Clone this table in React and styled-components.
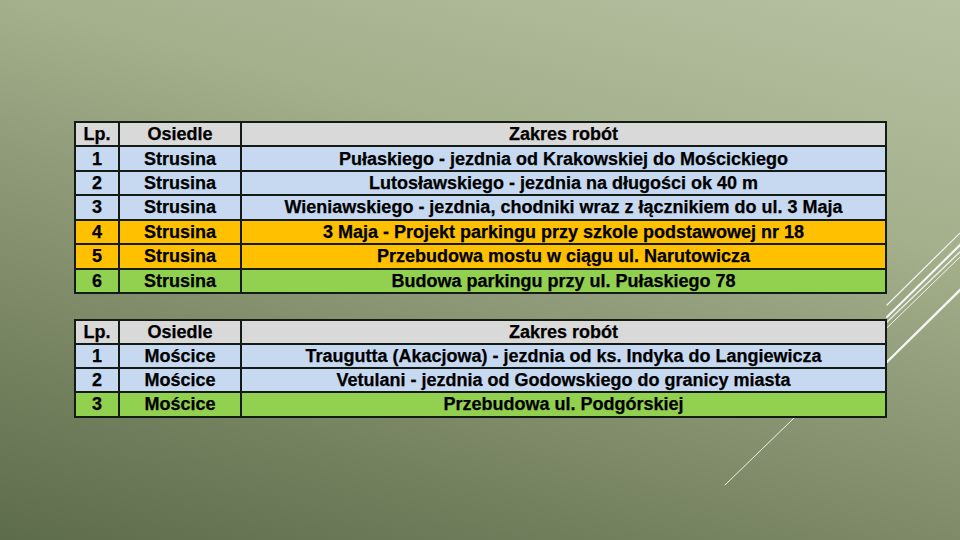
import React from "react";
import styled, { createGlobalStyle } from "styled-components";

const GlobalStyle = createGlobalStyle`
  html, body {
    margin: 0;
    padding: 0;
  }
  body {
    font-family: "Liberation Sans", Arial, sans-serif;
  }
`;

const Slide = styled.div`
  position: relative;
  width: 960px;
  height: 540px;
  overflow: hidden;
  box-sizing: border-box;
  padding: 121px 73px 0 74px;
  display: flex;
  flex-direction: column;
  gap: 25px;
  background: linear-gradient(
    15deg,
    #5d6c4b 0%,
    #7e8a68 32%,
    #a4b08c 68%,
    #b5c1a1 100%
  );
`;

const Decor = styled.svg`
  position: absolute;
  inset: 0;
  z-index: 0;
  pointer-events: none;
`;

const Table = styled.table`
  position: relative;
  z-index: 1;
  width: 100%;
  height: ${(p) => p.$height}px;
  border-collapse: collapse;
  table-layout: fixed;
  font-family: "Liberation Sans", Arial, sans-serif;
  font-weight: 700;
  font-size: 18px;
  color: #000;
  -webkit-text-stroke: 0.25px #000;
`;

const colors = {
  head: "#d9d9d9",
  blue: "#c6d9f1",
  orange: "#ffc000",
  green: "#92d050",
};

const Row = styled.tr`
  background: ${(p) => colors[p.$tone]};
`;

const Cell = styled.td`
  padding: 0;
  border: 2px solid #141a14;
  text-align: center;
  vertical-align: middle;
  line-height: 1;
  white-space: nowrap;
`;

const strusina = [
  ["1", "Strusina", "Pułaskiego - jezdnia od Krakowskiej do Mościckiego", "blue"],
  ["2", "Strusina", "Lutosławskiego - jezdnia na długości ok 40 m", "blue"],
  ["3", "Strusina", "Wieniawskiego - jezdnia, chodniki wraz z łącznikiem do ul. 3 Maja", "blue"],
  ["4", "Strusina", "3 Maja - Projekt parkingu przy szkole podstawowej nr 18", "orange"],
  ["5", "Strusina", "Przebudowa mostu w ciągu ul. Narutowicza", "orange"],
  ["6", "Strusina", "Budowa parkingu przy ul. Pułaskiego 78", "green"],
];

const moscice = [
  ["1", "Mościce", "Traugutta (Akacjowa) - jezdnia od ks. Indyka do Langiewicza", "blue"],
  ["2", "Mościce", "Vetulani - jezdnia od Godowskiego do granicy miasta", "blue"],
  ["3", "Mościce", "Przebudowa ul. Podgórskiej", "green"],
];

const WorksTable = ({ rows, height }) => (
  <Table $height={height}>
    <colgroup>
      <col style={{ width: 44 }} />
      <col style={{ width: 122 }} />
      <col />
    </colgroup>
    <tbody>
      <Row $tone="head">
        <Cell>Lp.</Cell>
        <Cell>Osiedle</Cell>
        <Cell>Zakres robót</Cell>
      </Row>
      {rows.map(([lp, area, scope, tone]) => (
        <Row key={lp} $tone={tone}>
          <Cell>{lp}</Cell>
          <Cell>{area}</Cell>
          <Cell>{scope}</Cell>
        </Row>
      ))}
    </tbody>
  </Table>
);

const Lines = () => (
  <Decor width="960" height="540" viewBox="0 0 960 540">
    <g stroke="#ffffff" strokeLinecap="round" fill="none">
      <line x1="887" y1="305" x2="962" y2="231" strokeWidth="1.2" strokeOpacity="0.85" />
      <line x1="887" y1="317" x2="962" y2="243" strokeWidth="2" strokeOpacity="0.95" />
      <line x1="887" y1="322" x2="962" y2="250" strokeWidth="1.4" strokeOpacity="0.8" />
      <line x1="725" y1="485" x2="962" y2="255" strokeWidth="1" strokeOpacity="0.85" />
      <line x1="887" y1="362" x2="962" y2="288" strokeWidth="2.4" strokeOpacity="0.9" />
    </g>
  </Decor>
);

export default function App() {
  return (
    <>
      <GlobalStyle />
      <Slide>
        <Lines />
        <WorksTable rows={strusina} height={173} />
        <WorksTable rows={moscice} height={98.5} />
      </Slide>
    </>
  );
}
